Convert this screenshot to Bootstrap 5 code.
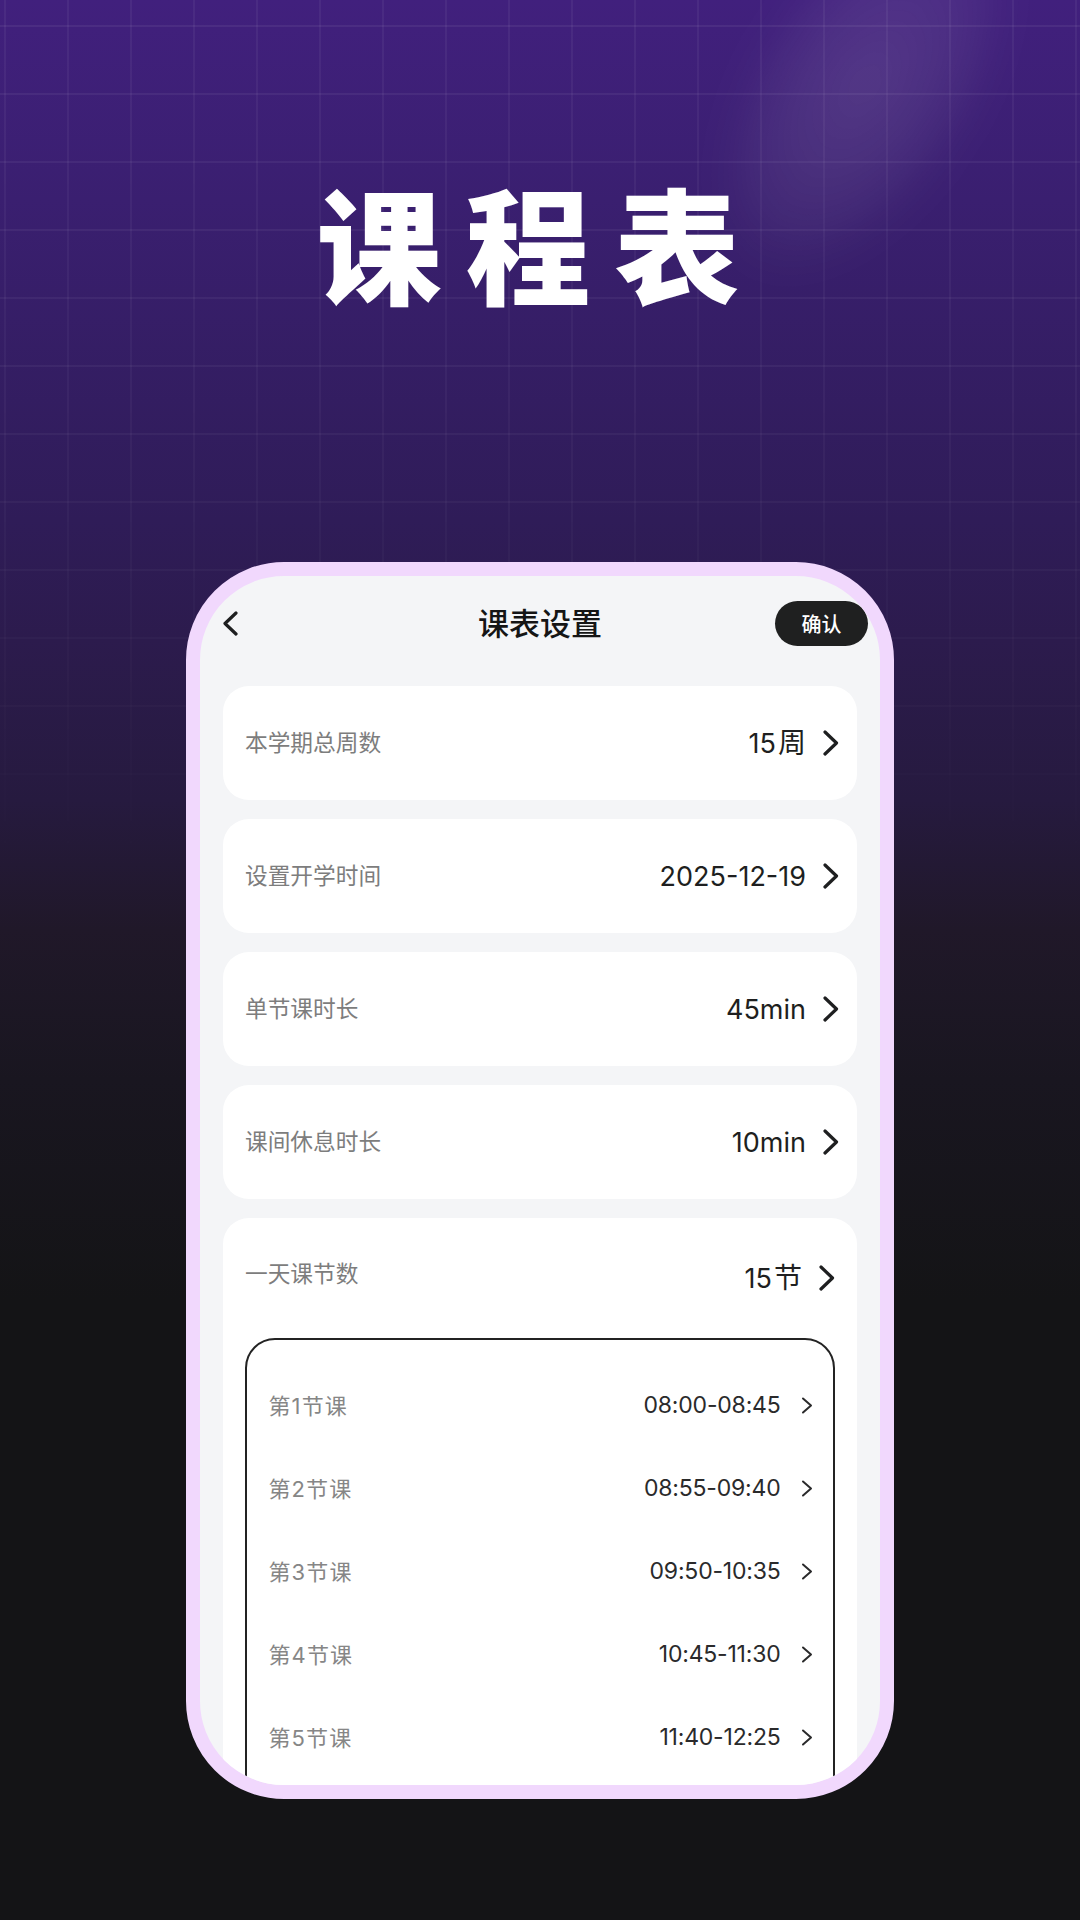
<!DOCTYPE html>
<html lang="zh">
<head>
<meta charset="utf-8">
<title>课程表</title>
<link rel="stylesheet" href="https://cdn.jsdelivr.net/npm/bootstrap@5.3.0/dist/css/bootstrap.min.css">
<style>
html,body{margin:0;background:#141416}
.stage{position:relative;width:1080px;height:1920px;overflow:hidden;font-family:Inter,"Noto Sans CJK SC",sans-serif;
  background:linear-gradient(180deg,#41207d 0,#3a1f70 200px,#2f1c58 520px,#2c1b4d 640px,#261a3f 800px,#201829 930px,#191620 1080px,#141416 1300px,#141416 1920px)}
.stage-grid{position:absolute;left:0;right:0;top:0;height:900px;
  background-image:linear-gradient(90deg,rgba(255,255,255,.05) 2px,transparent 2px),linear-gradient(180deg,rgba(255,255,255,.06) 2px,transparent 2px);
  background-size:63px 68px;background-position:67px 25px;
  -webkit-mask-image:linear-gradient(180deg,#000 0,rgba(0,0,0,.75) 400px,rgba(0,0,0,.4) 650px,transparent 890px);mask-image:linear-gradient(180deg,#000 0,rgba(0,0,0,.75) 400px,rgba(0,0,0,.4) 650px,transparent 890px)}
.stage-glow{position:absolute;left:750px;top:-130px;width:230px;height:430px;border-radius:50%;
  background:radial-gradient(ellipse at center,rgba(255,255,255,.11) 0,rgba(255,255,255,.06) 45%,transparent 72%);transform:rotate(33deg);filter:blur(16px)}
.hero-title{position:relative;margin:0;padding-top:166px;height:325px;line-height:150px;text-align:center;color:#fff;
  font-family:"Noto Sans CJK SC",sans-serif;font-weight:900;font-size:125px;letter-spacing:24px}
.phone{position:relative;width:708px;height:1237px;margin:237px auto 0;border:14px solid #f1d8fd;border-radius:98px;background:#f4f5f7;overflow:hidden;padding:25px 23px 0 23px}
.phone-head{position:relative;height:45px;margin-bottom:40px}
.phone-back{position:absolute;left:-1px;top:10px}
.phone-title{position:absolute;left:0;right:0;top:-2px;line-height:45px;text-align:center;font-size:31px;font-weight:500;color:#151515;font-family:"Noto Sans CJK SC",sans-serif}
.btn.confirm-btn{position:absolute;right:-11px;top:0;width:93px;height:45px;border-radius:23px;background:#1f2020;color:#fff;border:0;padding:0;font-size:20px;font-weight:500;font-family:"Noto Sans CJK SC",sans-serif}
.set-card{height:114px;margin-bottom:19px;border-radius:26px;background:#fff;border:0;padding:0 18px 0 22px}
.set-label{font-size:22.7px;color:#7d7d7d;font-family:"Noto Sans CJK SC",sans-serif;line-height:1;margin-top:-1px}
.set-value{font-size:27px;color:#1e1f20;line-height:1}
.set-unit{font-size:28px;margin-left:2px}
.big-card{background:#fff;border-radius:26px;padding:0 22px;height:800px}
.big-head{height:113px;margin-bottom:7px}
.big-head .set-label{margin-top:-3px}
.big-head .set-value{margin-top:6px}
.big-head svg{margin-top:6px}
.slot-box{border:2px solid #232323;border-radius:30px;padding:23.500px 20.500px 0 21.500px;height:600px}
.slot-row{height:83.200px}
.slot-label{font-size:22px;color:#868686;font-family:Inter,"Noto Sans CJK SC",sans-serif;line-height:1;letter-spacing:1.100px;margin-top:1px}
.slot-time{font-size:23px;color:#2a2a2b;line-height:1;letter-spacing:-.2px}
.slot-right{gap:20px}
</style>
</head>
<body>
<div class="stage">
  <div class="stage-grid"></div>
  <div class="stage-glow"></div>
  <h1 class="hero-title">课程表</h1>
  <div class="phone">
    <div class="phone-head">
      <svg class="phone-back" width="16" height="25" viewBox="0 0 16 25"><path d="M14 2 3 12.5 14 23" fill="none" stroke="#1e1f20" stroke-width="3.200" stroke-linecap="round" stroke-linejoin="round"/></svg>
      <div class="phone-title">课表设置</div>
      <button class="confirm-btn btn" type="button">确认</button>
    </div>

    <div class="set-card d-flex align-items-center justify-content-between">
      <span class="set-label">本学期总周数</span>
      <span class="d-flex align-items-center gap-3"><span class="set-value">15<span class="set-unit">周</span></span>
      <svg width="17" height="26" viewBox="0 0 17 26"><path d="M3 2 14.500 13 3 24" fill="none" stroke="#1e1f20" stroke-width="3.200" stroke-linecap="round" stroke-linejoin="round"/></svg></span>
    </div>
    <div class="set-card d-flex align-items-center justify-content-between">
      <span class="set-label">设置开学时间</span>
      <span class="d-flex align-items-center gap-3"><span class="set-value">2025-12-19</span>
      <svg width="17" height="26" viewBox="0 0 17 26"><path d="M3 2 14.500 13 3 24" fill="none" stroke="#1e1f20" stroke-width="3.200" stroke-linecap="round" stroke-linejoin="round"/></svg></span>
    </div>
    <div class="set-card d-flex align-items-center justify-content-between">
      <span class="set-label">单节课时长</span>
      <span class="d-flex align-items-center gap-3"><span class="set-value">45min</span>
      <svg width="17" height="26" viewBox="0 0 17 26"><path d="M3 2 14.500 13 3 24" fill="none" stroke="#1e1f20" stroke-width="3.200" stroke-linecap="round" stroke-linejoin="round"/></svg></span>
    </div>
    <div class="set-card d-flex align-items-center justify-content-between">
      <span class="set-label">课间休息时长</span>
      <span class="d-flex align-items-center gap-3"><span class="set-value">10min</span>
      <svg width="17" height="26" viewBox="0 0 17 26"><path d="M3 2 14.500 13 3 24" fill="none" stroke="#1e1f20" stroke-width="3.200" stroke-linecap="round" stroke-linejoin="round"/></svg></span>
    </div>

    <div class="big-card">
      <div class="big-head d-flex align-items-center justify-content-between">
        <span class="set-label">一天课节数</span>
        <span class="d-flex align-items-center gap-3"><span class="set-value">15<span class="set-unit">节</span></span>
        <svg width="17" height="26" viewBox="0 0 17 26"><path d="M3 2 14.500 13 3 24" fill="none" stroke="#1e1f20" stroke-width="3.200" stroke-linecap="round" stroke-linejoin="round"/></svg></span>
      </div>
      <div class="slot-box">
        <div class="slot-row d-flex align-items-center justify-content-between"><span class="slot-label">第1节课</span><span class="slot-right d-flex align-items-center"><span class="slot-time">08:00-08:45</span><svg width="12" height="17" viewBox="0 0 12 17"><path d="M2 1.500 10 8.500 2 15.500" fill="none" stroke="#2a2a2b" stroke-width="2" stroke-linecap="round" stroke-linejoin="round"/></svg></span></div>
        <div class="slot-row d-flex align-items-center justify-content-between"><span class="slot-label">第2节课</span><span class="slot-right d-flex align-items-center"><span class="slot-time">08:55-09:40</span><svg width="12" height="17" viewBox="0 0 12 17"><path d="M2 1.500 10 8.500 2 15.500" fill="none" stroke="#2a2a2b" stroke-width="2" stroke-linecap="round" stroke-linejoin="round"/></svg></span></div>
        <div class="slot-row d-flex align-items-center justify-content-between"><span class="slot-label">第3节课</span><span class="slot-right d-flex align-items-center"><span class="slot-time">09:50-10:35</span><svg width="12" height="17" viewBox="0 0 12 17"><path d="M2 1.500 10 8.500 2 15.500" fill="none" stroke="#2a2a2b" stroke-width="2" stroke-linecap="round" stroke-linejoin="round"/></svg></span></div>
        <div class="slot-row d-flex align-items-center justify-content-between"><span class="slot-label">第4节课</span><span class="slot-right d-flex align-items-center"><span class="slot-time">10:45-11:30</span><svg width="12" height="17" viewBox="0 0 12 17"><path d="M2 1.500 10 8.500 2 15.500" fill="none" stroke="#2a2a2b" stroke-width="2" stroke-linecap="round" stroke-linejoin="round"/></svg></span></div>
        <div class="slot-row d-flex align-items-center justify-content-between"><span class="slot-label">第5节课</span><span class="slot-right d-flex align-items-center"><span class="slot-time">11:40-12:25</span><svg width="12" height="17" viewBox="0 0 12 17"><path d="M2 1.500 10 8.500 2 15.500" fill="none" stroke="#2a2a2b" stroke-width="2" stroke-linecap="round" stroke-linejoin="round"/></svg></span></div>
      </div>
    </div>
  </div>
</div>
<script src="https://cdn.jsdelivr.net/npm/bootstrap@5.3.0/dist/js/bootstrap.bundle.min.js"></script>
</body>
</html>
